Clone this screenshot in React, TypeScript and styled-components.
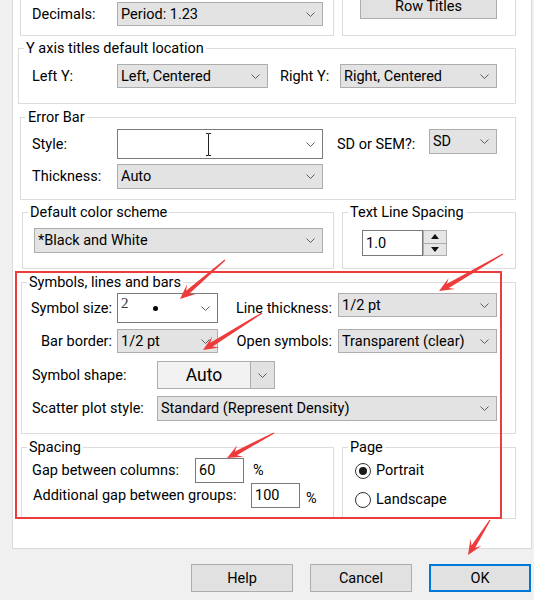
import React from "react";
import styled, { createGlobalStyle } from "styled-components";

const GlobalStyle = createGlobalStyle`
  *, *::before, *::after {
    box-sizing: border-box;
  }

  html,
  body {
    margin: 0;
    padding: 0;
  }

  body {
    background: #f0f0f0;
    font-family: Roboto, "Liberation Sans", Arial, sans-serif;
    font-size: 14.5px;
    color: #000;
    overflow: hidden;
  }
`;

function Chevron() {
  return (
    <svg width="9" height="5" viewBox="0 0 9 5">
      <polyline points="0.5,0.5 4.5,4.5 8.5,0.5" fill="none" stroke="#5c5c5c" strokeWidth="1" />
    </svg>
  );
}

function Triangle({ down }: { down?: boolean }) {
  return (
    <svg width="8" height="5" viewBox="0 0 8 5">
      <polygon points={down ? "0,0 8,0 4,5" : "0,5 8,5 4,0"} fill="#111" />
    </svg>
  );
}

type SelectProps = {
  w: number;
  h?: number;
  edit?: boolean;
  top?: boolean;
  children?: React.ReactNode;
};

function Select({ w, h, edit, top, children }: SelectProps) {
  return (
    <Combo $w={w} $h={h} $edit={edit} $top={top}>
      <ComboText>{children}</ComboText>
      <Chevron />
    </Combo>
  );
}

// annotation arrows drawn on top of the dialog
const arrows = [
  [225, 260, 180, 299],
  [503, 254, 439, 291],
  [262, 313, 203, 350],
  [274, 433, 227, 458],
  [490, 520, 468, 555],
];

function arrowPoints(x1: number, y1: number, x2: number, y2: number) {
  const dx = x2 - x1;
  const dy = y2 - y1;
  const len = Math.hypot(dx, dy);
  const ux = dx / len;
  const uy = dy / len;
  const nx = -uy;
  const ny = ux;
  const jx = x2 - ux * 10;
  const jy = y2 - uy * 10;
  const bx = x2 - ux * 15;
  const by = y2 - uy * 15;
  const pts = [
    [x1 + nx * 0.6, y1 + ny * 0.6],
    [jx + nx * 2.2, jy + ny * 2.2],
    [bx + nx * 6.5, by + ny * 6.5],
    [x2, y2],
    [bx - nx * 6.5, by - ny * 6.5],
    [jx - nx * 2.2, jy - ny * 2.2],
    [x1 - nx * 0.6, y1 - ny * 0.6],
  ];
  return pts.map((p) => p.map((v) => v.toFixed(1)).join(",")).join(" ");
}

function App() {
  return (
    <Window>
      <GlobalStyle />
      <TabPage>
        <Row $h={75}>
          <Group $h={75}>
            <Body $pl={11} $pb={9} $end>
              <Field>
                <Label $w={85}>Decimals:</Label>
                <Select w={206}>Period: 1.23</Select>
              </Field>
            </Body>
          </Group>
          <Group $h={75} $w={174}>
            <Body $pl={17} $pb={16} $end>
              <PushButton $w={137} $pt={3}>
                Row Titles
              </PushButton>
            </Body>
          </Group>
        </Row>

        <Row $mt={4}>
          <Group $h={64} $shift={-2}>
            <Legend>Y axis titles default location</Legend>
            <Body $pt={7} $pl={13}>
              <Field>
                <Label $w={85}>Left Y:</Label>
                <Select w={151}>Left, Centered</Select>
                <Label $w={60} $ml={12}>Right Y:</Label>
                <Select w={157}>Right, Centered</Select>
              </Field>
            </Body>
          </Group>
        </Row>

        <Row $mt={5}>
          <Group $h={91}>
            <Legend>Error Bar</Legend>
            <Body $pt={3} $pl={11}>
              <Field>
                <Label $w={85}>Style:</Label>
                <Combo $w={206} $h={30} $edit>
                  <ComboText />
                  <Chevron />
                  <IBeam width="7" height="23" viewBox="0 0 7 23">
                    <path d="M1 0.5h2.5M3.5 0.5h2.5M3.5 1v21M1 22.5h2.5M3.5 22.5h2.5" stroke="#222" fill="none" />
                  </IBeam>
                </Combo>
                <Label $w={92} $ml={14}>SD or SEM?:</Label>
                <Select w={68} h={25} top>
                  SD
                </Select>
              </Field>
              <Field $mt={5}>
                <Label $w={85}>Thickness:</Label>
                <Select w={206} h={25}>
                  Auto
                </Select>
              </Field>
            </Body>
          </Group>
        </Row>

        <Row $mt={4}>
          <Group $h={65} $shift={2}>
            <Legend>Default color scheme</Legend>
            <Body $pt={7} $pl={11}>
              <Select w={289} h={25}>
                *Black and White
              </Select>
            </Body>
          </Group>
          <Group $h={65} $w={174}>
            <Legend>Text Line Spacing</Legend>
            <Body $pt={9} $pl={19}>
              <Spin>
                <SpinInput>1.0</SpinInput>
                <SpinButtons>
                  <SpinButton>
                    <Triangle />
                  </SpinButton>
                  <SpinButton>
                    <Triangle down />
                  </SpinButton>
                </SpinButtons>
              </Spin>
            </Body>
          </Group>
        </Row>

        <Row $mt={5}>
          <Group $h={160} $shift={1}>
            <Legend>Symbols, lines and bars</Legend>
            <Body $pt={2} $pl={8}>
              <SymbolGrid>
                <GridLabel $pr={5}>Symbol size:</GridLabel>
                <Combo $w={101} $h={30} $edit>
                  <SizeDigit>2</SizeDigit>
                  <SizeDot />
                  <ComboText />
                  <Chevron />
                </Combo>
                <GridLabel $pr={6}>Line thickness:</GridLabel>
                <Select w={159} top>
                  1/2 pt
                </Select>

                <GridLabel $pr={5}>Bar border:</GridLabel>
                <Select w={101}>1/2 pt</Select>
                <GridLabel $pr={6}>Open symbols:</GridLabel>
                <Select w={159}>Transparent (clear)</Select>
              </SymbolGrid>

              <Field $mt={8}>
                <Label $w={127} $pl={2}>
                  Symbol shape:
                </Label>
                <ShapePicker>
                  <ShapeFace>Auto</ShapeFace>
                  <ShapeDrop>
                    <Chevron />
                  </ShapeDrop>
                </ShapePicker>
              </Field>

              <Field $mt={7}>
                <Label $w={127} $pl={2}>
                  Scatter plot style:
                </Label>
                <Select w={340} h={25}>
                  Standard (Represent Density)
                </Select>
              </Field>
            </Body>
          </Group>
        </Row>

        <Row $mt={5}>
          <Group $h={80} $shift={1}>
            <Legend>Spacing</Legend>
            <Body $pt={2} $pl={10}>
              <Field>
                <Label $w={163}>Gap between columns:</Label>
                <TextBox>60</TextBox>
                <Percent $ml={9}>%</Percent>
              </Field>
              <Field>
                <Label $w={219} $pl={1}>
                  Additional gap between groups:
                </Label>
                <TextBox>100</TextBox>
                <Percent $ml={6} $pt={5}>
                  %
                </Percent>
              </Field>
            </Body>
          </Group>
          <Group $h={80} $w={174}>
            <Legend>Page</Legend>
            <Body $pl={12}>
              <RadioRow>
                <RadioDot $on />
                Portrait
              </RadioRow>
              <RadioRow>
                <RadioDot />
                Landscape
              </RadioRow>
            </Body>
          </Group>
        </Row>
      </TabPage>

      <ButtonBar>
        <PushButton $w={102}>Help</PushButton>
        <PushButton $w={102}>Cancel</PushButton>
        <PushButton $w={102} $primary>
          OK
        </PushButton>
      </ButtonBar>

      <RedFrame />
      <Marks width="534" height="600" viewBox="0 0 534 600">
        {arrows.map(([x1, y1, x2, y2], i) => (
          <polygon key={i} points={arrowPoints(x1, y1, x2, y2)} fill="#ee3b3b" />
        ))}
      </Marks>
    </Window>
  );
}

export default App;

const Window = styled.div`
  position: relative;
  width: 534px;
  height: 600px;
  overflow: hidden;

  display: flex;
  flex-direction: column;
`;

const TabPage = styled.div`
  width: 520px;
  height: 589px;
  margin: -40px 0 0 12px;
  padding: 0 15px 0 7px;
  flex: none;

  background: #fff;
  border: 1px solid #d9d9d9;

  display: flex;
  flex-direction: column;
`;

const Row = styled.div<{ $mt?: number; $h?: number }>`
  display: flex;
  gap: 8px;
  flex: none;
  margin-top: ${(p) => p.$mt ?? 0}px;
  ${(p) => (p.$h ? `height: ${p.$h}px;` : "")}
`;

const Group = styled.fieldset<{ $h: number; $w?: number; $shift?: number }>`
  margin: 0 0 0 ${(p) => p.$shift ?? 0}px;
  padding: 0;
  min-width: 0;
  height: ${(p) => p.$h}px;
  border: 1px solid #dcdcdc;
  ${(p) => (p.$w ? `width: ${p.$w}px; flex: none;` : "flex: 1;")}

  display: flex;
  flex-direction: column;
`;

const Legend = styled.legend`
  margin-left: 5px;
  padding: 0 2px;
  line-height: 17px;
  font-size: 14.5px;
`;

const Body = styled.div<{ $pt?: number; $pl: number; $pb?: number; $end?: boolean }>`
  display: flex;
  flex-direction: column;
  align-items: flex-start;
  padding: ${(p) => p.$pt ?? 0}px 0 ${(p) => p.$pb ?? 0}px ${(p) => p.$pl}px;
  ${(p) => (p.$end ? "margin-top: auto;" : "")}
`;

const Field = styled.div<{ $mt?: number }>`
  display: flex;
  align-items: center;
  margin-top: ${(p) => p.$mt ?? 0}px;
`;

const Label = styled.span<{ $w?: number; $ml?: number; $pl?: number }>`
  flex: none;
  white-space: nowrap;
  ${(p) => (p.$w ? `width: ${p.$w}px;` : "")}
  margin-left: ${(p) => p.$ml ?? 0}px;
  padding-left: ${(p) => p.$pl ?? 0}px;
`;

const Combo = styled.div<{ $w: number; $h?: number; $edit?: boolean; $top?: boolean }>`
  position: relative;
  flex: none;
  width: ${(p) => p.$w}px;
  height: ${(p) => p.$h ?? 24}px;
  padding: 0 7px 0 3px;
  ${(p) => (p.$top ? "align-self: flex-start;" : "")}

  display: flex;
  align-items: center;

  background: ${(p) => (p.$edit ? "#fff" : "#e3e3e3")};
  border: 1px solid ${(p) => (p.$edit ? "#7a7a7a" : "#adadad")};
  white-space: nowrap;
`;

const ComboText = styled.span`
  flex: 1;
  overflow: hidden;
`;

const IBeam = styled.svg`
  position: absolute;
  left: 87px;
  top: 3px;
`;

const SizeDigit = styled.span`
  align-self: flex-start;
  width: 32px;
  margin-top: 1px;
  font-family: "Liberation Serif", serif;
  font-size: 15px;
  color: #333;
`;

const SizeDot = styled.span`
  width: 5px;
  height: 5px;
  border-radius: 50%;
  background: #000;
  flex: none;
`;

const Spin = styled.div`
  display: flex;
  height: 26px;
`;

const SpinInput = styled.div`
  width: 61px;
  padding-left: 3px;
  display: flex;
  align-items: center;
  background: #fff;
  border: 1px solid #7a7a7a;
`;

const SpinButtons = styled.div`
  width: 24px;
  display: flex;
  flex-direction: column;
`;

const SpinButton = styled.div`
  flex: 1;
  display: flex;
  align-items: center;
  justify-content: center;
  background: #e6e6e6;
  border: 1px solid #adadad;

  & + & {
    border-top: none;
  }
`;

const SymbolGrid = styled.div`
  display: grid;
  grid-template-columns: 87px 101px 120px 159px;
  grid-template-rows: 30px 24px;
  row-gap: 6px;
  align-items: center;
`;

const GridLabel = styled.span<{ $pr: number }>`
  text-align: right;
  white-space: nowrap;
  padding-right: ${(p) => p.$pr}px;
`;

const ShapePicker = styled.div`
  width: 118px;
  height: 28px;
  display: flex;
`;

const ShapeFace = styled.div`
  flex: 1;
  display: flex;
  align-items: center;
  justify-content: center;
  font-size: 17.5px;
  background: #f2f2f2;
  border: 1px solid #adadad;
  border-right: none;
`;

const ShapeDrop = styled.div`
  width: 25px;
  display: flex;
  align-items: center;
  justify-content: center;
  background: #e1e1e1;
  border: 1px solid #adadad;
`;

const TextBox = styled.div`
  width: 49px;
  height: 25px;
  padding-left: 3px;
  flex: none;
  display: flex;
  align-items: center;
  background: #fff;
  border: 1px solid #7a7a7a;
`;

const Percent = styled.span<{ $ml: number; $pt?: number }>`
  margin-left: ${(p) => p.$ml}px;
  padding-top: ${(p) => p.$pt ?? 0}px;
`;

const RadioRow = styled.label`
  height: 29px;
  display: flex;
  align-items: center;
  gap: 5px;
`;

const RadioDot = styled.span<{ $on?: boolean }>`
  width: 16px;
  height: 16px;
  border-radius: 50%;
  border: 1px solid #333;
  background: #fff;
  display: flex;
  align-items: center;
  justify-content: center;

  &::after {
    content: "";
    width: 8px;
    height: 8px;
    border-radius: 50%;
    background: #1a1a1a;
    display: ${(p) => (p.$on ? "block" : "none")};
  }
`;

const ButtonBar = styled.div`
  margin-top: 15px;
  padding-right: 3px;
  display: flex;
  justify-content: flex-end;
  gap: 17px;
`;

const PushButton = styled.button<{ $w: number; $primary?: boolean; $pt?: number }>`
  width: ${(p) => p.$w}px;
  height: 28px;
  padding: ${(p) => p.$pt ?? 0}px 0 0;
  flex: none;
  font: inherit;
  color: #000;
  background: #e1e1e1;
  border: ${(p) => (p.$primary ? "2px solid #0078d7" : "1px solid #adadad")};
`;

const RedFrame = styled.div`
  position: absolute;
  left: 15px;
  top: 271px;
  width: 487px;
  height: 248px;
  border: 2px solid #ee3b3b;
  pointer-events: none;
`;

const Marks = styled.svg`
  position: absolute;
  left: 0;
  top: 0;
  pointer-events: none;
`;
